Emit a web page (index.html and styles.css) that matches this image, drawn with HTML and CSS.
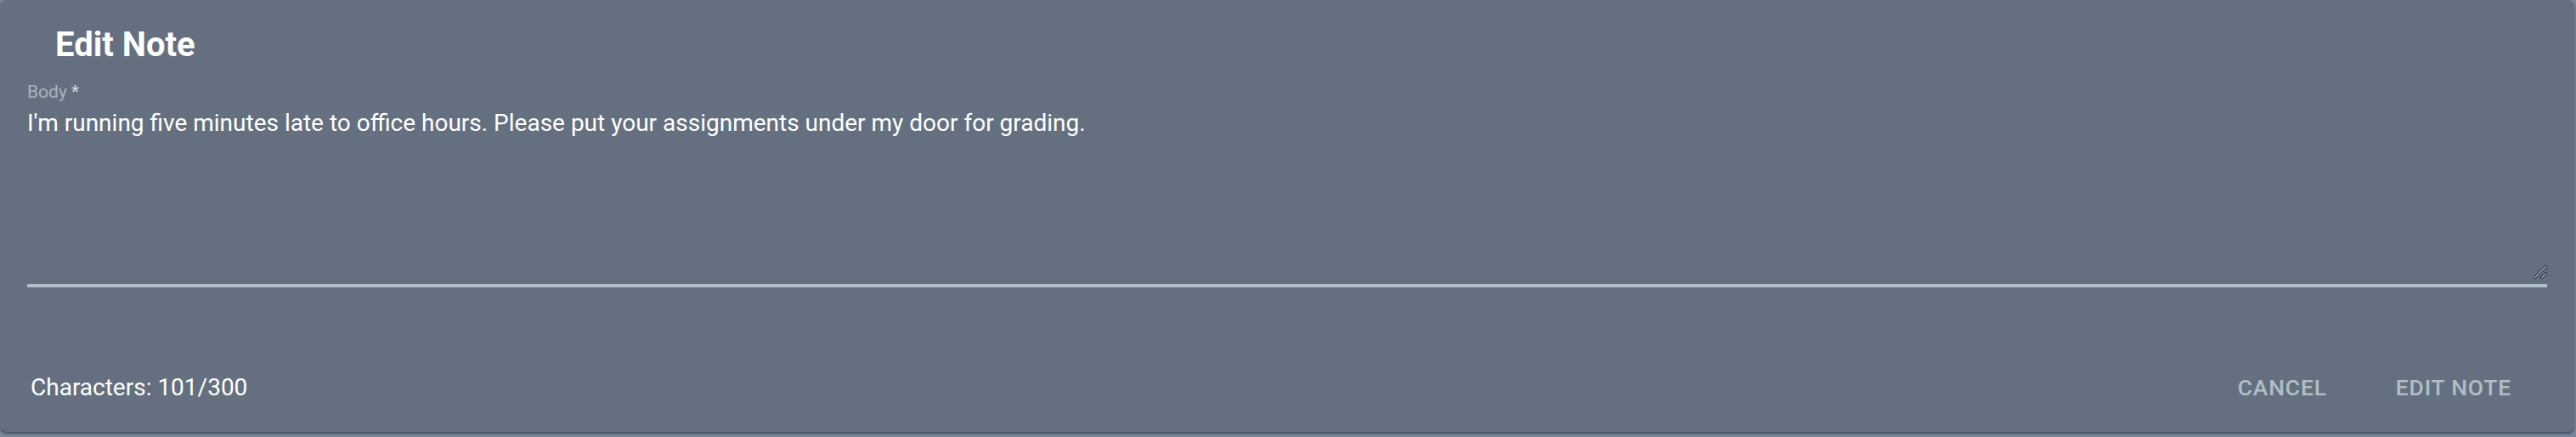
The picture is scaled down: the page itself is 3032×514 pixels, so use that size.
FILE: index.html
```html
<!DOCTYPE html>
<html lang="en">
<head>
<meta charset="utf-8">
<title>Edit Note</title>
<link rel="stylesheet" href="styles.css">
</head>
<body>
<div class="dialog">
  <h2 class="title">Edit Note</h2>
  <div class="field">
    <label class="label" for="body">Body <span class="req">*</span></label>
    <div class="input-wrap">
      <textarea id="body" class="input">I'm running five minutes late to office hours. Please put your assignments under my door for grading.</textarea>
      <svg class="grip" width="16" height="16" viewBox="0 0 16 16" aria-hidden="true">
        <g stroke-linecap="square">
          <line x1="1.5" y1="14.5" x2="14.5" y2="1.5" stroke="#1f2530" stroke-width="3.2"/>
          <line x1="1.5" y1="14.5" x2="14.5" y2="1.5" stroke="#b9bec4" stroke-width="1.3"/>
          <line x1="10" y1="14.5" x2="14.5" y2="10" stroke="#1f2530" stroke-width="3.2"/>
          <line x1="10" y1="14.5" x2="14.5" y2="10" stroke="#b9bec4" stroke-width="1.3"/>
        </g>
      </svg>
    </div>
  </div>
  <div class="footer">
    <span class="count">Characters: 101/300</span>
    <div class="actions">
      <button class="btn">Cancel</button>
      <button class="btn">Edit Note</button>
    </div>
  </div>
</div>
<script src="script.js"></script>
</body>
</html>
```
FILE: styles.css
```css
html, body {
  margin: 0;
  padding: 0;
}
body {
  background: #7a869a;
  width: 3032px;
  height: 514px;
  overflow: hidden;
  font-family: Roboto, "Liberation Sans", sans-serif;
}
.dialog {
  width: 3030px;
  height: 508px;
  background: #64707f;
  border-radius: 8px;
  box-shadow: 0 2px 3px rgba(20, 28, 40, 0.55);
  box-sizing: border-box;
  display: flex;
  flex-direction: column;
}
.title {
  margin: 0;
  padding: 29px 0 0 65px;
  font-size: 40px;
  line-height: 48px;
  font-weight: 700;
  color: #ffffff;
}
.field {
  margin: 19px 32px 0 32px;
  display: flex;
  flex-direction: column;
}
.label {
  font-size: 21px;
  line-height: 24px;
  color: #a9b3bc;
}
.req {
  color: #d6dbe0;
}
.input-wrap {
  position: relative;
}
.input {
  display: block;
  box-sizing: border-box;
  height: 218px;
  width: 100%;
  padding: 8px 0 0 0;
  margin: 0;
  border: none;
  border-bottom: 4px solid #b0bec5;
  background: transparent;
  color: #ffffff;
  caret-color: #c5ccd3;
  font-family: Roboto, "Liberation Sans", sans-serif;
  font-size: 28px;
  line-height: 34px;
  outline: none;
  resize: none;
}
.grip {
  position: absolute;
  right: 0;
  bottom: 10px;
}
.footer {
  margin-top: 102px;
  display: flex;
  justify-content: space-between;
  align-items: center;
  padding: 0 74px 0 36px;
}
.count {
  font-size: 28px;
  line-height: 32px;
  color: #ffffff;
}
.actions {
  display: flex;
  gap: 81px;
}
.btn {
  background: none;
  border: none;
  padding: 0;
  font-family: Roboto, "Liberation Sans", sans-serif;
  font-size: 26.5px;
  line-height: 32px;
  font-weight: 500;
  letter-spacing: 0.03em;
  text-transform: uppercase;
  color: #b0bec5;
}
```
FILE: script.js
```js
var ta = document.getElementById('body');
ta.focus();
ta.setSelectionRange(ta.value.length, ta.value.length);
```
